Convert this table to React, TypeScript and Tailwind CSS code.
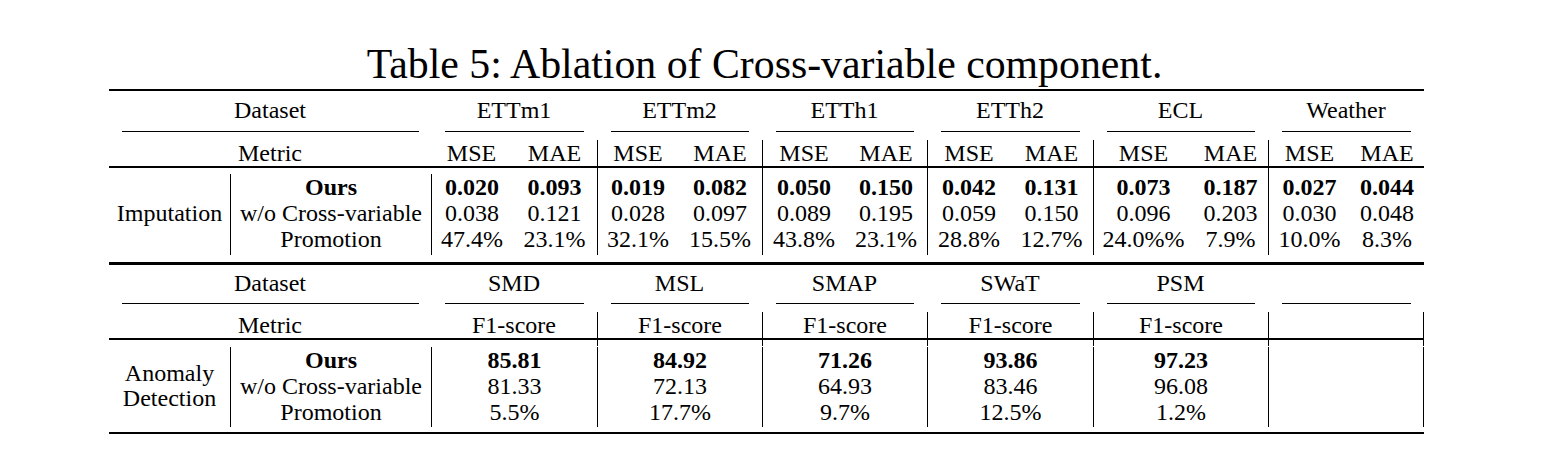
import React from "react";

const GRID =
  "grid grid-cols-[121px_201px_81px_85px_81px_84px_83px_82px_83px_83px_100px_75px_82px_74px]";

type Trip = [string, string];
const imputation: { name: string; ours: Trip; wo: Trip; promo: Trip }[] = [
  { name: "ETTm1", ours: ["0.020", "0.093"], wo: ["0.038", "0.121"], promo: ["47.4%", "23.1%"] },
  { name: "ETTm2", ours: ["0.019", "0.082"], wo: ["0.028", "0.097"], promo: ["32.1%", "15.5%"] },
  { name: "ETTh1", ours: ["0.050", "0.150"], wo: ["0.089", "0.195"], promo: ["43.8%", "23.1%"] },
  { name: "ETTh2", ours: ["0.042", "0.131"], wo: ["0.059", "0.150"], promo: ["28.8%", "12.7%"] },
  { name: "ECL", ours: ["0.073", "0.187"], wo: ["0.096", "0.203"], promo: ["24.0%%", "7.9%"] },
  { name: "Weather", ours: ["0.027", "0.044"], wo: ["0.030", "0.048"], promo: ["10.0%", "8.3%"] },
];

const anomaly: { name: string; ours: string; wo: string; promo: string }[] = [
  { name: "SMD", ours: "85.81", wo: "81.33", promo: "5.5%" },
  { name: "MSL", ours: "84.92", wo: "72.13", promo: "17.7%" },
  { name: "SMAP", ours: "71.26", wo: "64.93", promo: "9.7%" },
  { name: "SWaT", ours: "93.86", wo: "83.46", promo: "12.5%" },
  { name: "PSM", ours: "97.23", wo: "96.08", promo: "1.2%" },
  { name: "", ours: "", wo: "", promo: "" },
];

function CmidRow() {
  return (
    <div className={`${GRID} h-px`}>
      <div className="col-span-2 pl-[13px] pr-[12px]">
        <div className="h-px bg-black" />
      </div>
      {[0, 1, 2, 3, 4, 5].map((i) => (
        <div key={i} className="col-span-2 pl-[14px] pr-[13px]">
          <div className="h-px bg-black" />
        </div>
      ))}
    </div>
  );
}

function Line({ children, bold }: { children?: React.ReactNode; bold?: boolean }) {
  return (
    <div className={bold ? "h-[26px] leading-[26px] font-bold whitespace-nowrap" : "h-[26px] leading-[26px] whitespace-nowrap"}>
      {children}
    </div>
  );
}

function DatasetHeader({ names, h }: { names: string[]; h: string }) {
  return (
    <div className={`${GRID} ${h}`}>
      <div className="col-span-2 flex items-center justify-center pb-[2px]">Dataset</div>
      {names.map((n, i) => (
        <div key={i} className="col-span-2 flex items-center justify-center pb-[2px]">
          {n}
        </div>
      ))}
    </div>
  );
}

export default function App() {
  return (
    <div className="w-[1548px] h-[460px] bg-white text-black font-['Liberation_Serif',serif] text-[24px] leading-[26px] pt-[44px] pl-[109px]">
      <div className="w-[1315px]">
        <div className="h-[41px] leading-[41px] text-[41.8px] text-center pr-[4px] whitespace-nowrap">
          Table 5: Ablation of Cross-variable component.
        </div>
        <div className="mt-[4px] h-[2px] bg-black" />

        {/* Imputation block */}
        <DatasetHeader names={imputation.map((g) => g.name)} h="h-[40px]" />
        <CmidRow />
        <div className={`${GRID} h-[34px]`}>
          <div className="col-span-2 pt-[8px] pb-[8px] flex items-center justify-center">Metric</div>
          {imputation.map((g, i) => (
            <React.Fragment key={i}>
              <div className="pt-[8px] flex flex-col">
                <div
                  className={
                    i === 0
                      ? "flex-1 flex items-center justify-center pb-[8px]"
                      : "flex-1 flex items-center justify-center pb-[8px] border-l border-black"
                  }
                >
                  MSE
                </div>
              </div>
              <div className="pt-[8px] flex flex-col">
                <div className="flex-1 flex items-center justify-center pb-[8px]">MAE</div>
              </div>
            </React.Fragment>
          ))}
        </div>
        <div className="h-[2px] bg-black" />
        <div className={`${GRID} mt-[6px] h-[81px]`}>
          <div className="flex flex-col items-center pb-[3px]">
            <Line />
            <Line>Imputation</Line>
            <Line />
          </div>
          <div className="flex flex-col items-center border-l border-black pb-[3px]">
            <Line bold>Ours</Line>
            <Line>w/o Cross-variable</Line>
            <Line>Promotion</Line>
          </div>
          {imputation.map((g, i) => (
            <React.Fragment key={i}>
              <div className="flex flex-col items-center border-l border-black pb-[3px]">
                <Line bold>{g.ours[0]}</Line>
                <Line>{g.wo[0]}</Line>
                <Line>{g.promo[0]}</Line>
              </div>
              <div className="flex flex-col items-center pb-[3px]">
                <Line bold>{g.ours[1]}</Line>
                <Line>{g.wo[1]}</Line>
                <Line>{g.promo[1]}</Line>
              </div>
            </React.Fragment>
          ))}
        </div>
        <div className="mt-[7px] h-[3px] bg-black" />

        {/* Anomaly block */}
        <DatasetHeader names={anomaly.map((g) => g.name)} h="h-[38px]" />
        <CmidRow />
        <div className={`${GRID} h-[34px]`}>
          <div className="col-span-2 pt-[8px] pb-[8px] flex items-center justify-center">Metric</div>
          {anomaly.map((g, i) => (
            <div key={i} className="col-span-2 pt-[8px] flex flex-col">
              <div
                className={
                  i === 0
                    ? "flex-1 flex items-center justify-center pb-[8px]"
                    : i === 5
                    ? "flex-1 flex items-center justify-center pb-[8px] border-l border-r border-black"
                    : "flex-1 flex items-center justify-center pb-[8px] border-l border-black"
                }
              >
                {g.name ? "F1-score" : ""}
              </div>
            </div>
          ))}
        </div>
        <div className="h-[2px] bg-black" />
        <div className={`${GRID} mt-[7px] h-[80px]`}>
          <div className="flex flex-col items-center justify-center pb-[2px]">
            <div className="leading-[25px]">Anomaly</div>
            <div className="leading-[25px]">Detection</div>
          </div>
          <div className="flex flex-col items-center border-l border-black pb-[2px]">
            <Line bold>Ours</Line>
            <Line>w/o Cross-variable</Line>
            <Line>Promotion</Line>
          </div>
          {anomaly.map((g, i) => (
            <div
              key={i}
              className={
                i === 5
                  ? "col-span-2 flex flex-col items-center border-l border-r border-black pb-[2px]"
                  : "col-span-2 flex flex-col items-center border-l border-black pb-[2px]"
              }
            >
              <Line bold>{g.ours}</Line>
              <Line>{g.wo}</Line>
              <Line>{g.promo}</Line>
            </div>
          ))}
        </div>
        <div className="mt-[5px] h-[2px] bg-black" />
      </div>
    </div>
  );
}
